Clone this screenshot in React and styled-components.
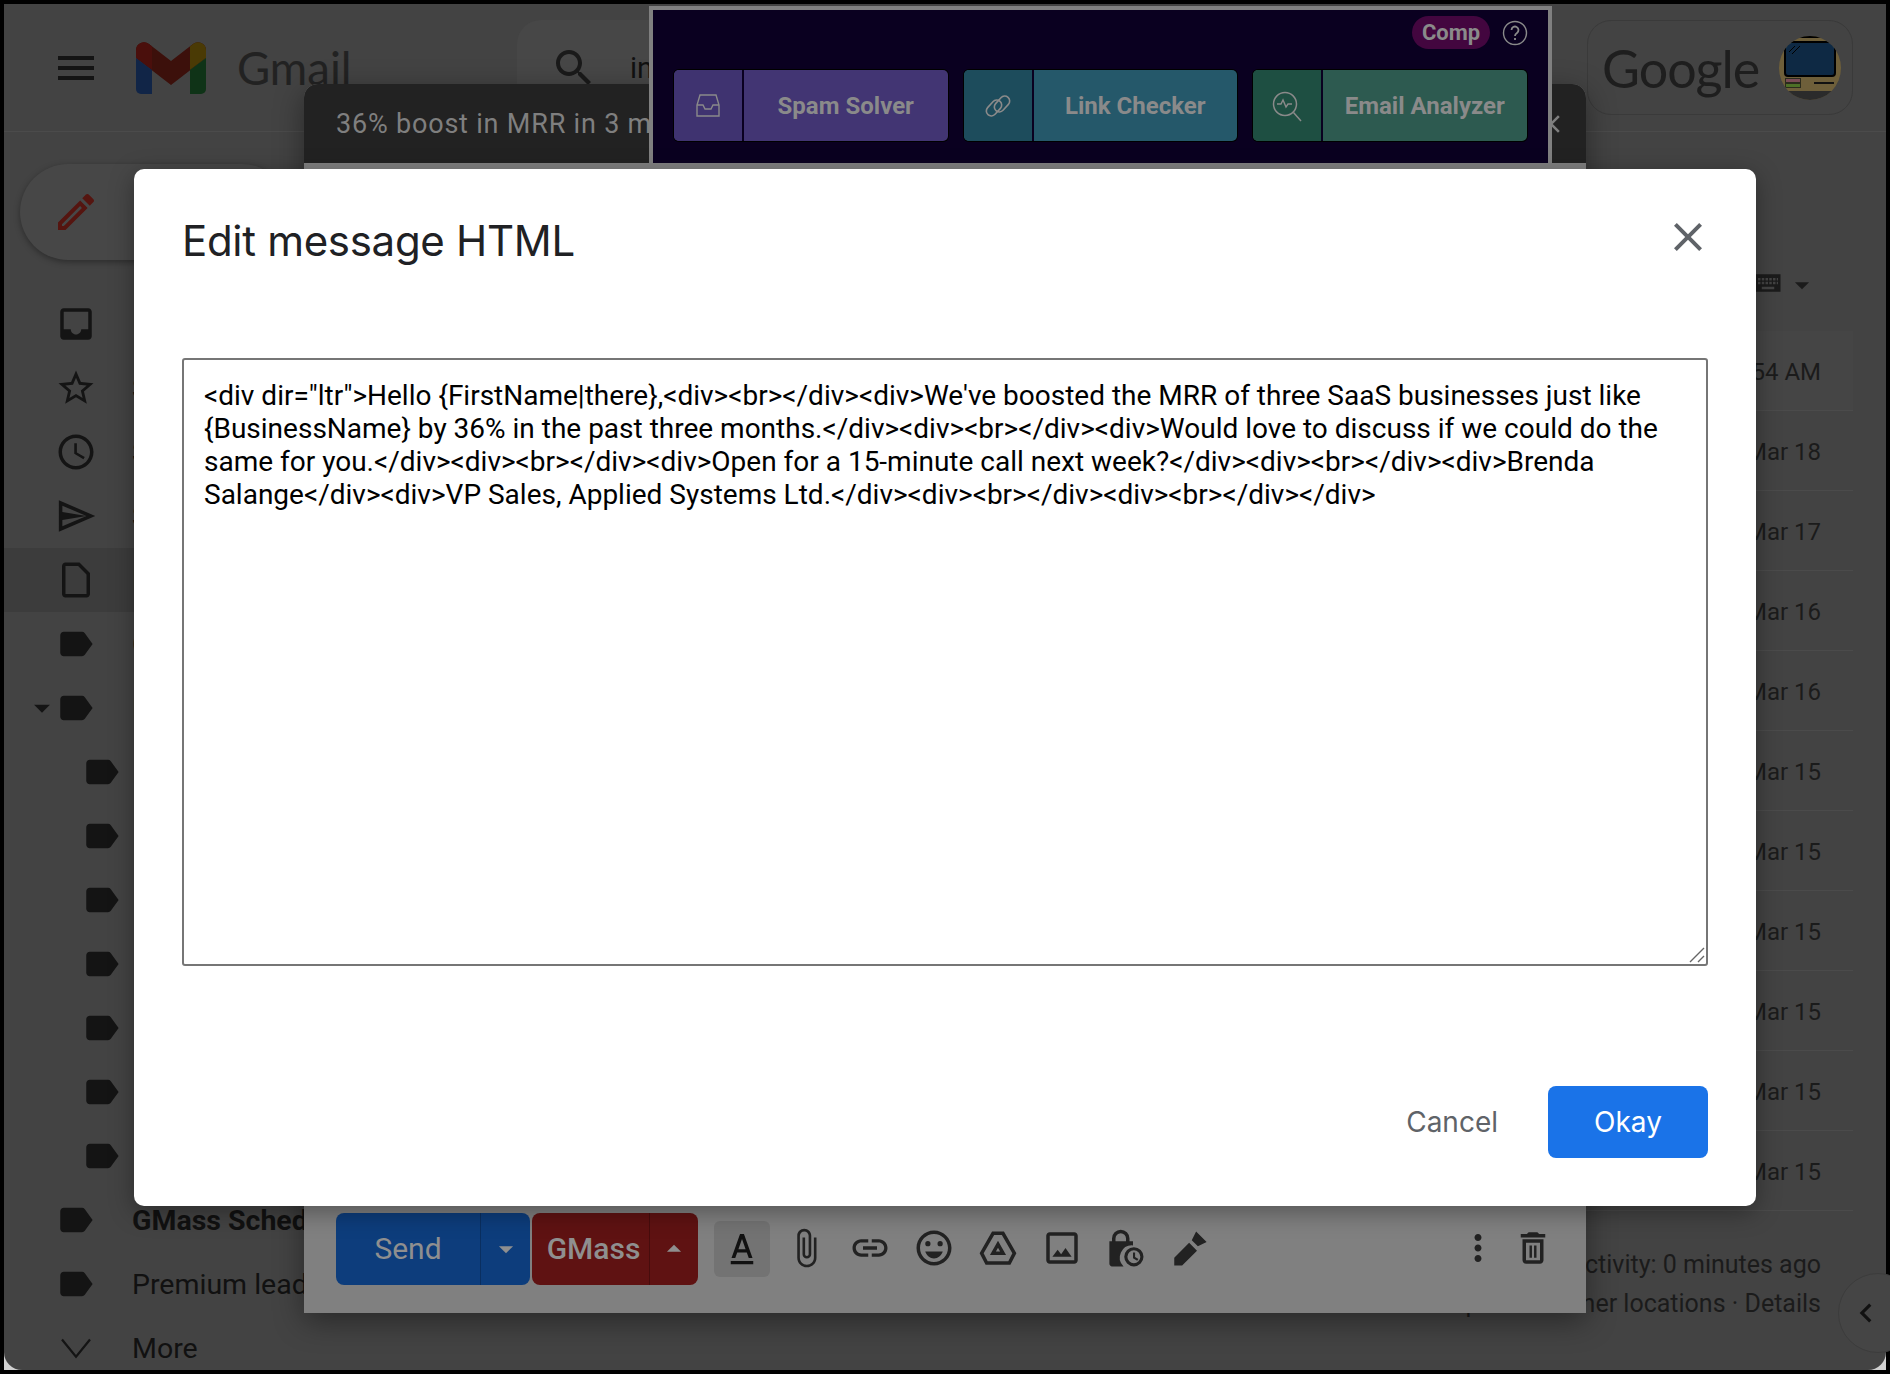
import React from 'react';
import styled, { createGlobalStyle } from 'styled-components';

const GlobalStyle = createGlobalStyle`
  html, body {
    margin: 0;
    padding: 0;
    background: #000;
    font-family: Roboto, "Liberation Sans", sans-serif;
  }
`;

const paths = {
  menu: 'M3 18h18v-2H3v2zm0-5h18v-2H3v2zm0-7v2h18V6H3z',
  search: 'M15.5 14h-.79l-.28-.27C15.41 12.59 16 11.11 16 9.5 16 5.91 13.09 3 9.5 3S3 5.91 3 9.5 5.91 16 9.5 16c1.61 0 3.09-.59 4.23-1.57l.27.28v.79l5 4.99L20.49 19l-4.99-5zm-6 0C7.01 14 5 11.99 5 9.5S7.01 5 9.5 5 14 7.01 14 9.5 11.99 14 9.5 14z',
  pencil: 'M3 17.25V21h3.75L17.81 9.94l-3.75-3.75L3 17.25zM5.92 19H5v-.92l9.06-9.06.92.92L5.92 19zM20.71 7.04c.39-.39.39-1.02 0-1.41l-2.34-2.34c-.39-.39-1.02-.39-1.41 0l-1.83 1.83 3.75 3.75 1.83-1.83z',
  inbox: 'M19 3H5c-1.1 0-2 .9-2 2v14c0 1.1.9 2 2 2h14c1.1 0 2-.9 2-2V5c0-1.1-.9-2-2-2zm0 12h-4c0 1.66-1.35 3-3 3s-3-1.34-3-3H4.99V5H19v10z',
  star: 'M22 9.24l-7.19-.62L12 2 9.19 8.63 2 9.24l5.46 4.73L5.82 21 12 17.27 18.18 21l-1.63-7.03L22 9.24zM12 15.4l-3.76 2.27 1-4.28-3.32-2.88 4.38-.38L12 6.1l1.71 4.04 4.38.38-3.32 2.88 1 4.28L12 15.4z',
  clock: 'M11.99 2C6.47 2 2 6.48 2 12s4.47 10 9.99 10C17.52 22 22 17.52 22 12S17.52 2 11.99 2zM12 20c-4.42 0-8-3.58-8-8s3.58-8 8-8 8 3.58 8 8-3.58 8-8 8zm.5-13H11v6l5.25 3.15.75-1.23-4.5-2.67z',
  send: 'M2.2 3L23 12 2.2 21zM4.200 6.100V9.700L18 12zM4.200 14.300V17.900L18 12z',
  draft: 'M14 2H6c-1.1 0-1.99.9-1.99 2L4 20c0 1.1.89 2 1.99 2H18c1.1 0 2-.9 2-2V8l-6-6zM6 20V4h7.200l4.800 4.800V20H6z',
  label: 'M17.03 5.84A2 2 0 0 0 15.4 5H5c-1.1 0-2 .9-2 2v10c0 1.1.9 2 2 2h10.4c.66 0 1.25-.32 1.63-.84L21.5 12l-4.47-6.16z',
  caret: 'M7 10l5 5 5-5z',
  caretUp: 'M7 14l5-5 5 5z',
  chevronDown: 'M3.500 7.500L12 18l8.500-10.500-1-.8L12 16 4.500 6.700z',
  chevronLeft: 'M15.4 7.4L14 6l-6 6 6 6 1.4-1.4L10.8 12z',
  close: 'M19 6.41L17.59 5 12 10.59 6.41 5 5 6.41 10.59 12 5 17.59 6.41 19 12 13.41 17.59 19 19 17.59 13.41 12z',
  textColor: 'M4.500 20h15v2.200h-15zM10.700 2h2.600L19 18h-2.500l-1.300-3.700H8.800L7.500 18H5zM9.600 12.200h4.800L12 5.400z',
  attach: 'M16.5 6v11.5c0 2.21-1.79 4-4 4s-4-1.79-4-4V5c0-1.38 1.12-2.5 2.5-2.5s2.5 1.12 2.5 2.5v10.5c0 .55-.45 1-1 1s-1-.45-1-1V6H10v9.5c0 1.38 1.12 2.5 2.5 2.5s2.5-1.12 2.5-2.5V5c0-2.21-1.79-4-4-4S7 2.79 7 5v12.5c0 3.04 2.46 5.5 5.5 5.5s5.5-2.46 5.5-5.5V6h-1.5z',
  link: 'M3.9 12c0-1.71 1.39-3.1 3.1-3.1h4V7H7c-2.76 0-5 2.24-5 5s2.24 5 5 5h4v-1.9H7c-1.71 0-3.1-1.39-3.1-3.1zM8 13h8v-2H8v2zm9-6h-4v1.9h4c1.71 0 3.1 1.39 3.1 3.1s-1.39 3.1-3.1 3.1h-4V17h4c2.76 0 5-2.24 5-5s-2.24-5-5-5z',
  emoji: 'M11.99 2C6.47 2 2 6.48 2 12s4.47 10 9.99 10C17.52 22 22 17.52 22 12S17.52 2 11.99 2zM12 20c-4.42 0-8-3.58-8-8s3.58-8 8-8 8 3.58 8 8-3.58 8-8 8zM8.5 11a1.5 1.5 0 1 0 0-3 1.5 1.5 0 0 0 0 3zm7 0a1.5 1.5 0 1 0 0-3 1.5 1.5 0 0 0 0 3zM7 14c.78 2.34 2.72 4 5 4s4.22-1.66 5-4H7z',
  drive: 'M8.6 2.5h6.8L22.5 15l-3.4 6.5H4.9L1.5 15 8.6 2.5zm1.2 2L3.8 15l2.3 4.5h11.8l2.3-4.5-6-10.5H9.8zM12 7.8L16.6 16H7.4L12 7.8zm0 4L10.8 14h2.4L12 11.8z',
  image: 'M19 3H5c-1.1 0-2 .9-2 2v14c0 1.1.9 2 2 2h14c1.1 0 2-.9 2-2V5c0-1.1-.9-2-2-2zm0 16H5V5h14v14zM6.5 17l3-4 2 2.5 2.5-3.5 3.5 5h-11z',
  lockClock: 'M14 8.2V6.5a5 5 0 0 0-10 0v1.7H2.5V21c0 .8.7 1.5 1.5 1.5h6.6A7 7 0 0 1 16 10.5V8.2h-2zM6 6.5a3 3 0 0 1 6 0v1.7H6V6.5zM16.5 11.5a5.5 5.5 0 1 0 0 11 5.5 5.5 0 0 0 0-11zm0 1.8a3.7 3.7 0 1 1 0 7.4 3.7 3.7 0 0 1 0-7.4zM16 14.5v3.3l2.4 1.5.7-1-1.9-1.2v-2.6H16z',
  pen: 'M3 22v-4.5l8.5-8.5 4.5 4.5L7.5 22H3zM13 7.5l2.5-5 6 6-5 2.5-3.5-3.5z',
  dots: 'M12 8c1.1 0 2-.9 2-2s-.9-2-2-2-2 .9-2 2 .9 2 2 2zm0 2c-1.1 0-2 .9-2 2s.9 2 2 2 2-.9 2-2-.9-2-2-2zm0 6c-1.1 0-2 .9-2 2s.9 2 2 2 2-.9 2-2-.9-2-2-2z',
  trash: 'M6 19c0 1.1.9 2 2 2h8c1.1 0 2-.9 2-2V7H6v12zM8 9h8v10H8V9zm7.5-5l-1-1h-5l-1 1H5v2h14V4h-3.5zM10 10.5h1.4v7H10zm2.6 0H14v7h-1.4z',
  keyboard: 'M22 5H2v14h20V5zM4 8h2v2H4V8zm3 0h2v2H7V8zm3 0h2v2h-2V8zm3 0h2v2h-2V8zm3 0h2v2h-2V8zm3 0h1v2h-1V8zM4 11h2v2H4v-2zm3 0h2v2H7v-2zm3 0h2v2h-2v-2zm3 0h2v2h-2v-2zm3 0h2v2h-2v-2zm3 0h1v2h-1v-2zM7 15h10v2H7v-2z',
};

const Svg = styled.svg`
  display: block;
  flex: none;
  width: ${(p) => p.$size}px;
  height: ${(p) => p.$size}px;
  fill: ${(p) => p.$color || '#141414'};
  fill-rule: evenodd;
`;

const Glyph = ({ name, size = 42, color }) => (
  <Svg viewBox="0 0 24 24" $size={size} $color={color}>
    <path d={paths[name]} />
  </Svg>
);

const Page = styled.div`
  position: relative;
  width: 1890px;
  height: 1374px;
  box-sizing: border-box;
  padding: 4px;
  background: #000;
  overflow: hidden;
`;

const Shell = styled.div`
  height: 100%;
  background: #d0d0d0;
`;

const Window = styled.div`
  height: 100%;
  display: flex;
  flex-direction: column;
  background: #434343;
  border-radius: 0 0 18px 18px;
  overflow: hidden;
`;

const TopBar = styled.header`
  height: 127px;
  flex: none;
  display: flex;
  align-items: center;
  padding-left: 48px;
  border-bottom: 1px solid #4b4b4b;
`;

const LogoMark = styled.svg`
  display: block;
  flex: none;
  width: 70px;
  height: 52px;
  margin-left: 36px;
`;

const Wordmark = styled.span`
  margin-left: 31px;
  font-family: Lato, "Open Sans", sans-serif;
  font-size: 45.5px;
  color: #222;
  width: 280px;
  flex: none;
`;

const SearchBox = styled.div`
  flex: none;
  width: 900px;
  height: 96px;
  display: flex;
  align-items: center;
  gap: 32px;
  padding-left: 33px;
  box-sizing: border-box;
  background: #474747;
  border-radius: 24px;
  font-size: 29px;
  color: #111;
  overflow: hidden;
  white-space: nowrap;
`;

const AccountBox = styled.div`
  flex: none;
  width: 266px;
  height: 95px;
  margin-left: 170px;
  box-sizing: border-box;
  display: flex;
  align-items: center;
  justify-content: space-between;
  padding: 0 11px 0 14px;
  border: 1px solid #3a3a3a;
  border-radius: 24px;
`;

const GoogleWord = styled.span`
  font-family: Lato, "Open Sans", sans-serif;
  font-size: 52px;
  letter-spacing: -1px;
  color: #1e1e1e;
`;

const Avatar = styled.svg`
  display: block;
  width: 62px;
  height: 64px;
`;

const Content = styled.div`
  flex: 1;
  display: flex;
  min-height: 0;
`;

const Sidebar = styled.nav`
  width: 300px;
  flex: none;
`;

const ComposePill = styled.div`
  width: 270px;
  height: 96px;
  box-sizing: border-box;
  margin: 32px 0 32px 16px;
  display: flex;
  align-items: center;
  padding-left: 32px;
  background: #474747;
  border-radius: 48px;
  box-shadow: 0 2px 6px rgba(0, 0, 0, 0.35);
`;

const SideRow = styled.div`
  height: 64px;
  display: flex;
  align-items: center;
  padding-left: ${(p) => (p.$nested ? 50 : 24)}px;
  background: ${(p) => (p.$active ? '#3c3c3c' : 'transparent')};
  font-size: 28.5px;
  font-weight: ${(p) => (p.$bold ? 700 : 400)};
  color: #111;
  white-space: nowrap;
`;

const CaretSlot = styled.span`
  width: 27px;
  flex: none;
  margin-left: -5px;
  margin-right: 5px;
`;

const SideLabel = styled.span`
  margin-left: 35px;
`;

const Main = styled.main`
  flex: 1;
  padding-right: 33px;
  display: flex;
  flex-direction: column;
`;

const ListTools = styled.div`
  height: 199px;
  flex: none;
  box-sizing: border-box;
  padding: 136px 34px 0 0;
  display: flex;
  justify-content: flex-end;
  align-items: flex-start;
  gap: 2px;
`;

const MessageRow = styled.div`
  height: 80px;
  flex: none;
  box-sizing: border-box;
  display: flex;
  align-items: center;
  justify-content: flex-end;
  padding: 2px 32px 0 0;
  background: ${(p) => (p.$first ? '#454545' : 'transparent')};
  border-bottom: 1px solid #4b4b4b;
  font-size: 24px;
  color: #1b1b1b;
`;

const ListFooter = styled.div`
  padding: 34px 32px 0 0;
  text-align: right;
  font-size: 25px;
  line-height: 39px;
  color: #1b1b1b;
`;

const PanelToggle = styled.div`
  position: absolute;
  left: 1838px;
  top: 1273px;
  width: 80px;
  height: 80px;
  display: flex;
  align-items: center;
  padding-left: 8px;
  box-sizing: border-box;
  background: #454545;
  border: 1px solid #3c3c3c;
  border-radius: 50%;
`;

const Compose = styled.section`
  position: absolute;
  left: 304px;
  top: 84px;
  width: 1282px;
  height: 1229px;
  display: flex;
  flex-direction: column;
  background: #808080;
  border-radius: 14px 14px 0 0;
  box-shadow: 0 8px 30px rgba(0, 0, 0, 0.4);
`;

const ComposeHead = styled.div`
  height: 79px;
  flex: none;
  box-sizing: border-box;
  display: flex;
  align-items: center;
  justify-content: space-between;
  padding: 0 20px 0 32px;
  background: #222;
  border-radius: 14px 14px 0 0;
  font-size: 27px;
  letter-spacing: 0.8px;
  color: #7f7f7f;
`;

const ComposeBody = styled.div`
  flex: 1;
`;

const ComposeTools = styled.div`
  height: 72px;
  flex: none;
  display: flex;
  align-items: center;
  padding: 0 21px 0 32px;
  margin-bottom: 28px;
`;

const SplitButton = styled.div`
  display: flex;
  height: 72px;
  width: ${(p) => p.$width}px;
  flex: none;
  margin-right: ${(p) => p.$gap}px;
  border-radius: 8px;
  overflow: hidden;
  background: ${(p) => p.$bg};
  color: #8f8f8f;
  font-size: 30px;
  font-weight: ${(p) => (p.$bold ? 500 : 400)};
`;

const SplitLabel = styled.div`
  flex: 1;
  display: flex;
  align-items: center;
  justify-content: center;
  padding: 0 0 2px ${(p) => (p.$shift ? 6 : 0)}px;
`;

const SplitArrow = styled.div`
  width: ${(p) => p.$width}px;
  flex: none;
  display: flex;
  align-items: center;
  justify-content: center;
  border-left: 1px solid ${(p) => p.$line};
`;

const FormatButton = styled.div`
  width: 56px;
  height: 56px;
  margin: -1px 4px 0 16px;
  flex: none;
  display: flex;
  align-items: center;
  justify-content: center;
  background: #737373;
  border-radius: 6px;
`;

const ToolIcon = styled.div`
  width: ${(p) => p.$width || 64}px;
  margin-top: -2px;
  flex: none;
  display: flex;
  justify-content: center;
`;

const ToolGap = styled.div`
  flex: 1;
`;

const ExtBar = styled.div`
  position: absolute;
  left: 649px;
  top: 6px;
  width: 903px;
  height: 163px;
  box-sizing: border-box;
  display: flex;
  flex-direction: column;
  padding: 6px 20px 0 21px;
  background: #0a0020;
  border: solid #808080;
  border-width: 4px 4px 6px;
`;

const ExtTop = styled.div`
  height: 33px;
  display: flex;
  justify-content: flex-end;
  align-items: center;
  gap: 12px;
  margin-bottom: 21px;
`;

const CompBadge = styled.span`
  width: 78px;
  height: 33px;
  display: flex;
  align-items: center;
  justify-content: center;
  background: #43063f;
  border-radius: 17px;
  font-size: 22px;
  font-weight: 700;
  color: #8a8a8a;
`;

const ExtButtons = styled.div`
  display: flex;
  gap: 16px;
`;

const ExtButton = styled.div`
  width: 273.5px;
  height: 71px;
  display: flex;
  border-radius: 5px;
  overflow: hidden;
  background: ${(p) => p.$bg};
  box-shadow: 0 0 0 1px #000;
  font-size: 24px;
  font-weight: 700;
  color: #8a8a8a;
`;

const ExtIcon = styled.div`
  width: 68px;
  flex: none;
  display: flex;
  align-items: center;
  justify-content: center;
  background: ${(p) => p.$bg};
  border-right: 2px solid #0a0020;
`;

const ExtLabel = styled.div`
  flex: 1;
  display: flex;
  align-items: center;
  justify-content: center;
`;

const StrokeIcon = styled.svg`
  display: block;
  fill: none;
  stroke: #8a8a8a;
  stroke-width: 1.4;
  width: ${(p) => p.$size}px;
  height: ${(p) => p.$size}px;
`;

const Modal = styled.div`
  position: absolute;
  left: 134px;
  top: 169px;
  width: 1622px;
  height: 1037px;
  box-sizing: border-box;
  padding: 0 48px 48px;
  display: flex;
  flex-direction: column;
  background: #fff;
  border-radius: 10px;
  box-shadow: 0 6px 24px rgba(0, 0, 0, 0.35);
`;

const ModalHead = styled.div`
  height: 189px;
  flex: none;
  box-sizing: border-box;
  padding-top: 44px;
  display: flex;
  justify-content: space-between;
  align-items: flex-start;
`;

const ModalTitle = styled.h2`
  margin: 0;
  font-family: Inter, sans-serif;
  font-size: 42px;
  font-weight: 400;
  line-height: 56px;
  letter-spacing: -0.3px;
  color: #202124;
`;

const CloseButton = styled.button`
  padding: 0;
  margin: 0 -4px 0 0;
  border: 0;
  background: none;
`;

const FieldWrap = styled.div`
  position: relative;
  flex: none;
`;

const HtmlField = styled.textarea`
  display: block;
  width: 100%;
  height: 608px;
  box-sizing: border-box;
  padding: 19px 20px;
  border: 2px solid #767676;
  border-radius: 3px;
  outline: none;
  resize: none;
  font-family: Roboto, sans-serif;
  font-size: 28px;
  line-height: 33px;
  color: #000;
  background: #fff;
`;

const ResizeGrip = styled.svg`
  position: absolute;
  right: 3px;
  bottom: 3px;
  width: 16px;
  height: 16px;
  stroke: #666;
  stroke-width: 1.4;
`;

const ModalFooter = styled.div`
  margin-top: auto;
  display: flex;
  justify-content: flex-end;
  align-items: center;
  gap: 50px;
`;

const CancelButton = styled.button`
  padding: 0;
  border: 0;
  background: none;
  font-family: Inter, sans-serif;
  font-size: 28px;
  color: #5f6368;
`;

const OkayButton = styled.button`
  width: 160px;
  height: 72px;
  border: 0;
  border-radius: 8px;
  background: #1a73e8;
  font-family: Inter, sans-serif;
  font-size: 28px;
  color: #fff;
`;

const html = `<div dir="ltr">Hello {FirstName|there},<div><br></div><div>We've boosted the MRR of three SaaS businesses just like {BusinessName} by 36% in the past three months.</div><div><br></div><div>Would love to discuss if we could do the same for you.</div><div><br></div><div>Open for a 15-minute call next week?</div><div><br></div><div>Brenda Salange</div><div>VP Sales, Applied Systems Ltd.</div><div><br></div><div><br></div></div>`;

const sideItems = [
  { icon: 'inbox', text: 'Inbox' },
  { icon: 'star', text: 'Starred' },
  { icon: 'clock', text: 'Snoozed' },
  { icon: 'send', text: 'Sent' },
  { icon: 'draft', text: 'Drafts', active: true },
  { icon: 'label', text: 'Clients' },
  { icon: 'label', text: 'Leads', caret: true },
  { icon: 'label', text: 'Cold', nested: true },
  { icon: 'label', text: 'Warm', nested: true },
  { icon: 'label', text: 'Hot', nested: true },
  { icon: 'label', text: 'Demo', nested: true },
  { icon: 'label', text: 'Trial', nested: true },
  { icon: 'label', text: 'Won', nested: true },
  { icon: 'label', text: 'Lost', nested: true },
  { icon: 'label', text: 'GMass Scheduled', bold: true },
  { icon: 'label', text: 'Premium leads' },
  { icon: 'chevronDown', text: 'More' },
];

const dates = ['9:54 AM', 'Mar 18', 'Mar 17', 'Mar 16', 'Mar 16', 'Mar 15', 'Mar 15', 'Mar 15', 'Mar 15', 'Mar 15', 'Mar 15'];

const toolIcons = ['attach', 'link', 'emoji', 'drive', 'image', 'lockClock', 'pen'];

const GmailLogo = () => (
  <LogoMark viewBox="0 0 70 52">
    <path d="M0 8a8 8 0 0 1 13-6l22 17 22-17a8 8 0 0 1 13 6v8L35 43 0 16z" fill="#3c100b" />
    <path d="M0 8a8 8 0 0 1 13-6l3 2.4V28L0 16z" fill="#4a0f0c" />
    <path d="M0 16l16 12v24H5a5 5 0 0 1-5-5z" fill="#112547" />
    <path d="M54 4.400l3-2.400a8 8 0 0 1 13 6v8L54 28z" fill="#4a3a05" />
    <path d="M70 16L54 28v24h11a5 5 0 0 0 5-5z" fill="#0f3317" />
  </LogoMark>
);

const UserAvatar = () => (
  <Avatar viewBox="0 0 62 64">
    <defs>
      <clipPath id="avatarClip">
        <ellipse cx="31" cy="32" rx="31" ry="32" />
      </clipPath>
    </defs>
    <g clipPath="url(#avatarClip)">
      <rect width="62" height="64" fill="#6e5f3a" />
      <rect x="0" y="0" width="62" height="2" fill="#000" />
      <rect x="6" y="6" width="50" height="34" rx="3" fill="#0e2944" stroke="#000" strokeWidth="2" />
      <path d="M10 16l6-6M13 18l8-8" stroke="#000" strokeWidth="1" />
      <rect x="6" y="42" width="16" height="10" fill="#2b2b1d" />
      <rect x="7" y="43" width="14" height="3" fill="#7a4b55" />
      <rect x="7" y="48" width="14" height="3" fill="#4d7027" />
      <rect x="35" y="46" width="20" height="2" fill="#111" />
      <rect x="0" y="55" width="62" height="9" fill="#2b2b2b" />
    </g>
  </Avatar>
);

const App = () => {
  return (
    <>
      <GlobalStyle />
      <Page>
        <Shell>
          <Window>
            <TopBar>
              <Glyph name="menu" size={48} />
              <GmailLogo />
              <Wordmark>Gmail</Wordmark>
              <SearchBox>
                <Glyph name="search" size={48} color="#1a1a1a" />
                <span>in:drafts</span>
              </SearchBox>
              <AccountBox>
                <GoogleWord>Google</GoogleWord>
                <UserAvatar />
              </AccountBox>
            </TopBar>
            <Content>
              <Sidebar>
                <ComposePill>
                  <Glyph name="pencil" size={48} color="#551510" />
                </ComposePill>
                {sideItems.map((item, i) => (
                  <SideRow key={i} $active={item.active} $bold={item.bold} $nested={item.nested}>
                    <CaretSlot>{item.caret && <Glyph name="caret" size={38} />}</CaretSlot>
                    <Glyph name={item.icon} />
                    <SideLabel>{item.text}</SideLabel>
                  </SideRow>
                ))}
              </Sidebar>
              <Main>
                <ListTools>
                  <Glyph name="keyboard" size={30} color="#1b1b1b" />
                  <Glyph name="caret" size={34} color="#1b1b1b" />
                </ListTools>
                {dates.map((d, i) => (
                  <MessageRow key={i} $first={i === 0}>{d}</MessageRow>
                ))}
                <ListFooter>
                  <div>Last account activity: 0 minutes ago</div>
                  <div>Open in 1 other locations · Details</div>
                </ListFooter>
              </Main>
            </Content>
          </Window>
        </Shell>

        <PanelToggle>
          <Glyph name="chevronLeft" size={38} color="#111" />
        </PanelToggle>

        <Compose>
          <ComposeHead>
            <span>36% boost in MRR in 3 months</span>
            <Glyph name="close" size={30} color="#7f7f7f" />
          </ComposeHead>
          <ComposeBody />
          <ComposeTools>
            <SplitButton $width={194} $gap={2} $bg="#0d3d7c">
              <SplitLabel>Send</SplitLabel>
              <SplitArrow $width={49} $line="#0a2f60">
                <Glyph name="caret" size={34} color="#8f8f8f" />
              </SplitArrow>
            </SplitButton>
            <SplitButton $width={166} $gap={0} $bg="#5f1212" $bold>
              <SplitLabel $shift>GMass</SplitLabel>
              <SplitArrow $width={48} $line="#470c0c">
                <Glyph name="caretUp" size={34} color="#8f8f8f" />
              </SplitArrow>
            </SplitButton>
            <FormatButton>
              <Glyph name="textColor" size={36} color="#111" />
            </FormatButton>
            {toolIcons.map((name) => (
              <ToolIcon key={name}>
                <Glyph name={name} size={42} color="#222" />
              </ToolIcon>
            ))}
            <ToolGap />
            <ToolIcon $width={46}>
              <Glyph name="dots" size={42} color="#222" />
            </ToolIcon>
            <ToolIcon>
              <Glyph name="trash" size={42} color="#222" />
            </ToolIcon>
          </ComposeTools>
        </Compose>

        <ExtBar>
          <ExtTop>
            <CompBadge>Comp</CompBadge>
            <StrokeIcon viewBox="0 0 26 26" $size={26}>
              <circle cx="13" cy="13" r="11.5" />
              <path d="M9.5 10a3.5 3.5 0 1 1 5.500 2.900c-1.200.8-2 1.400-2 3" strokeWidth="1.800" />
              <path d="M13 18v2" strokeWidth="1.800" />
            </StrokeIcon>
          </ExtTop>
          <ExtButtons>
            <ExtButton $bg="#423573">
              <ExtIcon $bg="#3f3370">
                <StrokeIcon viewBox="0 0 28 28" $size={28}>
                  <path d="M6 3h16l3 10v11H3V13zM3 13h6l2 4h6l2-4h6" />
                </StrokeIcon>
              </ExtIcon>
              <ExtLabel>Spam Solver</ExtLabel>
            </ExtButton>
            <ExtButton $bg="#25586a">
              <ExtIcon $bg="#1d4c5c">
                <StrokeIcon viewBox="0 0 32 32" $size={32}>
                  <rect x="3" y="13" width="18" height="10" rx="5" transform="rotate(-48 12 18)" strokeWidth="1.600" />
                  <rect x="11" y="9" width="18" height="10" rx="5" transform="rotate(-48 20 14)" strokeWidth="1.600" />
                </StrokeIcon>
              </ExtIcon>
              <ExtLabel>Link Checker</ExtLabel>
            </ExtButton>
            <ExtButton $bg="#2d5a50">
              <ExtIcon $bg="#1e4f42">
                <StrokeIcon viewBox="0 0 34 34" $size={34}>
                  <circle cx="15" cy="15" r="11.500" strokeWidth="1.500" />
                  <path d="M23.500 23.500L31 32" strokeWidth="1.500" />
                  <path d="M7 15h4l2-4 3 7 2-3h4" />
                </StrokeIcon>
              </ExtIcon>
              <ExtLabel>Email Analyzer</ExtLabel>
            </ExtButton>
          </ExtButtons>
        </ExtBar>

        <Modal>
          <ModalHead>
            <ModalTitle>Edit message HTML</ModalTitle>
            <CloseButton>
              <Glyph name="close" size={48} color="#5f6368" />
            </CloseButton>
          </ModalHead>
          <FieldWrap>
            <HtmlField readOnly defaultValue={html} spellCheck={false} />
            <ResizeGrip viewBox="0 0 16 16">
              <path d="M1 15L15 1M9 15l6-6" />
            </ResizeGrip>
          </FieldWrap>
          <ModalFooter>
            <CancelButton>Cancel</CancelButton>
            <OkayButton>Okay</OkayButton>
          </ModalFooter>
        </Modal>
      </Page>
    </>
  );
};

export default App;
